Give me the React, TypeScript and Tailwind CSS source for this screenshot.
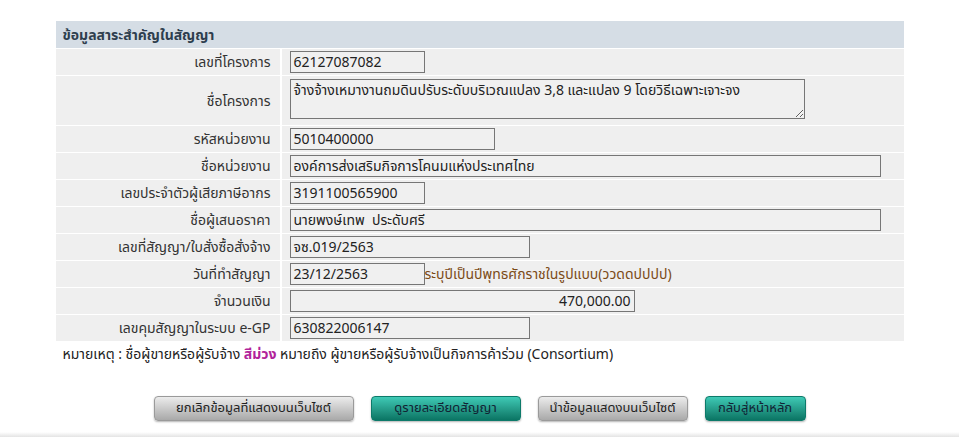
import React from 'react';

type Row = {
  label: string;
  value: string;
  width: string;
  kind?: 'textarea' | 'money' | 'date';
};

const rows: Row[] = [
  { label: 'เลขที่โครงการ', value: '62127087082', width: 'w-[135px]' },
  {
    label: 'ชื่อโครงการ',
    value: 'จ้างจ้างเหมางานถมดินปรับระดับบริเวณแปลง 3,8 และแปลง 9 โดยวิธีเฉพาะเจาะจง',
    width: 'w-[515px]',
    kind: 'textarea',
  },
  { label: 'รหัสหน่วยงาน', value: '5010400000', width: 'w-[205px]' },
  { label: 'ชื่อหน่วยงาน', value: 'องค์การส่งเสริมกิจการโคนมแห่งประเทศไทย', width: 'w-[591px]' },
  { label: 'เลขประจำตัวผู้เสียภาษีอากร', value: '3191100565900', width: 'w-[135px]' },
  { label: 'ชื่อผู้เสนอราคา', value: 'นายพงษ์เทพ  ประดับศรี', width: 'w-[591px]' },
  { label: 'เลขที่สัญญา/ใบสั่งซื้อสั่งจ้าง', value: 'จซ.019/2563', width: 'w-[240px]' },
  { label: 'วันที่ทำสัญญา', value: '23/12/2563', width: 'w-[135px]', kind: 'date' },
  { label: 'จำนวนเงิน', value: '470,000.00', width: 'w-[345px]', kind: 'money' },
  { label: 'เลขคุมสัญญาในระบบ e-GP', value: '630822006147', width: 'w-[240px]' },
];

const font = { fontFamily: 'Tahoma, "Noto Sans Thai", "Liberation Sans", sans-serif' };

function Field({ row }: { row: Row }) {
  if (row.kind === 'textarea') {
    return (
      <textarea
        readOnly
        value={row.value}
        className={`${row.width} h-[40px] block resize-y border border-[#767676] bg-[#f0f0f0] px-[3px] pt-[2px] text-[14px] leading-[18px] text-[#222] outline-none`}
        style={font}
      />
    );
  }
  return (
    <div className="flex items-center">
      <div
        className={`${row.width} h-[22px] border border-[#767676] bg-[#f0f0f0] px-[3px] pt-[2px] text-[14px] leading-[18px] text-[#222] whitespace-pre ${
          row.kind === 'money' ? 'text-right' : ''
        }`}
      >
        {row.value}
      </div>
      {row.kind === 'date' && (
        <span className="pt-[1px] text-[14px] text-[#7b4a16]">ระบุปีเป็นปีพุทธศักราชในรูปแบบ(ววดดปปปป)</span>
      )}
    </div>
  );
}

export default function App() {
  return (
    <div className="relative w-[959px] h-[437px] bg-white overflow-hidden text-[#222]" style={font}>
      <div className="w-[848px] mx-auto pt-[21px]">
        <table className="w-full border-separate [border-spacing:0_1px] -mt-px">
          <tbody>
            <tr>
              <td colSpan={2} className="bg-[#d5dde5] h-[27px] px-[7px] pt-[1px] text-[14px] font-bold text-[#2e3e4e]">
                ข้อมูลสาระสำคัญในสัญญา
              </td>
            </tr>
            {rows.map(row => (
              <tr key={row.label}>
                <td className="w-[226px] bg-[#efefef] border-r-2 border-white pr-[9px] pt-[1px] text-right text-[14px] text-[#333] align-middle">
                  {row.label}
                </td>
                <td
                  className={`bg-[#efefef] pl-[8px] ${row.kind === 'textarea' ? 'pt-[3px] pb-[6px] h-[49px]' : 'h-[26px] py-[2px]'}`}
                >
                  <Field row={row} />
                </td>
              </tr>
            ))}
          </tbody>
        </table>
        <p className="pl-[7px] mt-[3px] text-[14px] leading-[20px] text-[#222]">
          หมายเหตุ : ชื่อผู้ขายหรือผู้รับจ้าง <span className="text-[#b1239a] font-bold">สีม่วง</span> หมายถึง
          ผู้ขายหรือผู้รับจ้างเป็นกิจการค้าร่วม (Consortium)
        </p>
      </div>

      <div className="flex justify-center gap-[17px] mt-[31px]">
        <button className="h-[25px] w-[200px] rounded-[4px] border border-[#9a9a9a] bg-gradient-to-b from-[#ececec] to-[#a9a9a9] text-[13px] text-[#222] shadow-[0_1px_2px_rgba(0,0,0,0.3)]">
          ยกเลิกข้อมูลที่แสดงบนเว็บไซต์
        </button>
        <button className="h-[25px] w-[150px] rounded-[4px] border border-[#0d7a6a] bg-gradient-to-b from-[#3fcab6] to-[#0a7564] text-[13px] text-[#123] shadow-[0_1px_2px_rgba(0,0,0,0.3)]">
          ดูรายละเอียดสัญญา
        </button>
        <button className="h-[25px] w-[150px] rounded-[4px] border border-[#9a9a9a] bg-gradient-to-b from-[#ececec] to-[#a9a9a9] text-[13px] text-[#222] shadow-[0_1px_2px_rgba(0,0,0,0.3)]">
          นำข้อมูลแสดงบนเว็บไซต์
        </button>
        <button className="h-[25px] w-[101px] rounded-[4px] border border-[#0d7a6a] bg-gradient-to-b from-[#3fcab6] to-[#0a7564] text-[13px] text-[#123] shadow-[0_1px_2px_rgba(0,0,0,0.3)]">
          กลับสู่หน้าหลัก
        </button>
      </div>

      <div className="absolute bottom-0 left-0 right-0 h-[5px] bg-gradient-to-b from-white to-[#e4e4e4]" />
    </div>
  );
}
